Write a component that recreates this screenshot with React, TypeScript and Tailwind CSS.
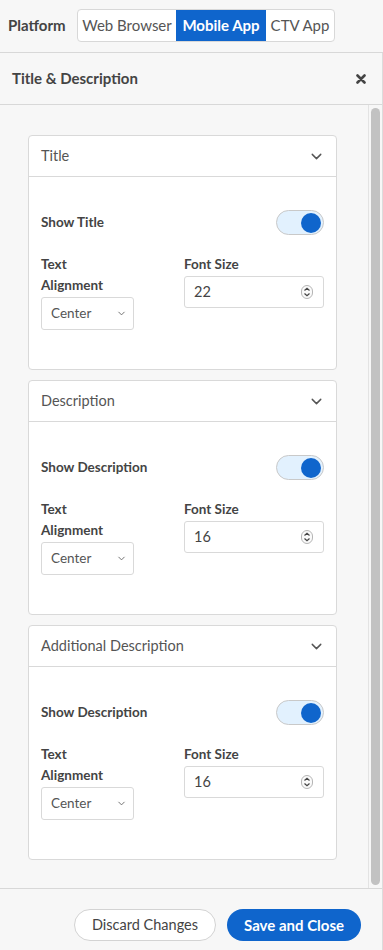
import { ChevronDown } from "lucide-react";

interface SectionProps {
  title: string;
  toggleLabel: string;
  fontSize: string;
}

function Toggle() {
  return (
    <span className="flex h-[25px] w-[48px] items-center justify-end rounded-full border border-[#c9c9c9] bg-[#e2f1fe] pr-[2px]">
      <span className="h-[20px] w-[20px] rounded-full bg-[#0f65cc]" />
    </span>
  );
}

function Spinner() {
  return (
    <svg width="12" height="14" viewBox="0 0 12 14" fill="none">
      <rect x="0.5" y="0.5" width="11" height="13" rx="5.5" stroke="#b5b5b5" fill="#fafafa" />
      <path d="M3.5 5.5 L6 3.2 L8.5 5.5" stroke="#444" strokeWidth="1.2" />
      <path d="M3.5 8.5 L6 10.8 L8.5 8.5" stroke="#444" strokeWidth="1.2" />
    </svg>
  );
}

function Section({ title, toggleLabel, fontSize }: SectionProps) {
  return (
    <div className="w-[309px] rounded-[4px] border border-[#d9d9d9] bg-white">
      <div className="flex h-[41px] items-center justify-between border-b border-[#d9d9d9] pr-[11px] pl-[12px]">
        <span className="text-[14.5px] text-[#555]">{title}</span>
        <ChevronDown size={17} strokeWidth={2} className="text-[#555]" />
      </div>
      <div className="px-[12px] pt-[33px] pb-[39px]">
        <div className="flex items-center justify-between">
          <span className="text-[13.5px] font-bold text-[#444]">{toggleLabel}</span>
          <Toggle />
        </div>
        <div className="mt-[19px] flex">
          <div className="w-[143px]">
            <div className="text-[13.5px] leading-[21px] font-bold text-[#444]">
              Text
              <br />
              Alignment
            </div>
            <div className="mt-[1px] flex h-[33px] w-[93px] items-center justify-between rounded-[3px] border border-[#d9d9d9] pr-[6px] pl-[9px]">
              <span className="text-[13.5px] text-[#555]">Center</span>
              <ChevronDown size={11} strokeWidth={2} className="text-[#666]" />
            </div>
          </div>
          <div className="w-[140px]">
            <div className="text-[13.5px] leading-[21px] font-bold text-[#444]">Font Size</div>
            <div className="mt-[1px] flex h-[32px] w-[140px] items-center justify-between rounded-[3px] border border-[#d9d9d9] pr-[10px] pl-[9px]">
              <span className="text-[14.5px] text-[#444]">{fontSize}</span>
              <Spinner />
            </div>
          </div>
        </div>
      </div>
    </div>
  );
}

export default function App() {
  return (
    <div
      className="flex h-[950px] w-[383px] flex-col bg-[#f7f7f7]"
      style={{ fontFamily: "Lato, 'Open Sans', sans-serif" }}
    >
      <div className="flex h-[53px] shrink-0 items-center border-b border-[#d8d8d8] pb-[1px] pl-[8px]">
        <span className="w-[69px] text-[15px] font-bold text-[#444]">Platform</span>
        <div className="flex h-[33px] overflow-hidden rounded-[4px] border border-[#d8d8d8] bg-white text-[15px]">
          <span className="flex w-[98px] items-center justify-center text-[#555]">Web Browser</span>
          <span className="flex w-[90px] items-center justify-center bg-[#0f65cc] font-bold text-white">
            Mobile App
          </span>
          <span className="flex w-[68px] items-center justify-center text-[#555]">CTV App</span>
        </div>
      </div>

      <div className="flex min-h-0 flex-1 flex-col border-r border-[#dcdcdc]">
        <div className="flex h-[52px] shrink-0 items-center justify-between border-b border-[#d8d8d8] pr-[16px] pl-[12px]">
          <span className="text-[15px] font-bold text-[#444]">Title &amp; Description</span>
          <svg width="10" height="10" viewBox="0 0 10 10">
            <path d="M1.5 1.5 L8.5 8.5 M8.5 1.5 L1.5 8.5" stroke="#444" strokeWidth="2.6" strokeLinecap="round" />
          </svg>
        </div>

        <div className="flex min-h-0 flex-1">
          <div className="flex flex-1 flex-col gap-[10px] overflow-hidden pt-[30px] pl-[28px]">
            <Section title="Title" toggleLabel="Show Title" fontSize="22" />
            <Section title="Description" toggleLabel="Show Description" fontSize="16" />
            <Section title="Additional Description" toggleLabel="Show Description" fontSize="16" />
          </div>
          <div className="flex w-[14px] shrink-0 justify-center border-l border-[#e3e3e3] py-[3px]">
            <div className="w-[9px] rounded-full bg-[#c2c2c2]" />
          </div>
        </div>

        <div className="flex h-[62px] shrink-0 items-end justify-end gap-[11px] border-t border-[#d8d8d8] pr-[21px] pb-[9px]">
          <button className="h-[32px] w-[142px] rounded-full border border-[#d3d3d3] bg-white text-[14.5px] text-[#444]">
            Discard Changes
          </button>
          <button className="h-[32px] w-[134px] rounded-full bg-[#0f65cc] text-[15px] font-bold text-white">
            Save and Close
          </button>
        </div>
      </div>
    </div>
  );
}
